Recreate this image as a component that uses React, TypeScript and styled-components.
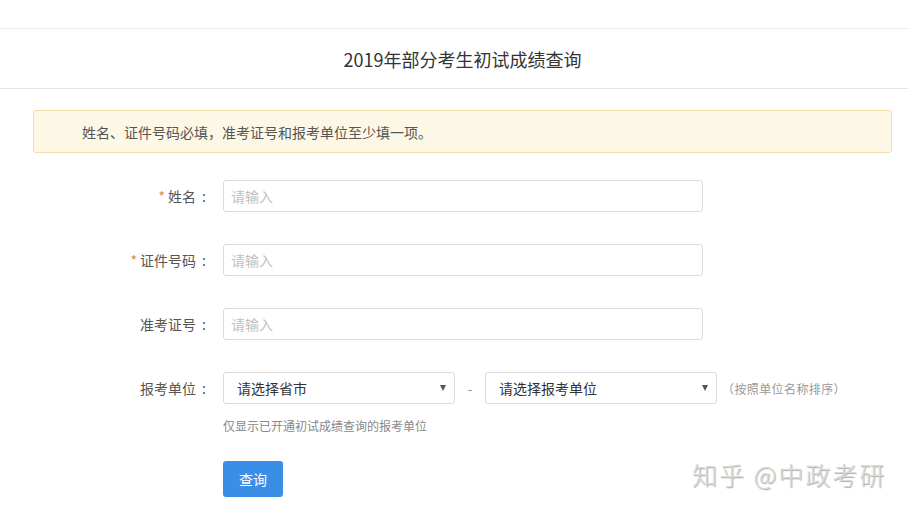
import styled, { createGlobalStyle } from "styled-components";

const GlobalStyle = createGlobalStyle`
	body {
		margin: 0;
		background: #fff;
		font-family: "Noto Sans CJK SC", "Noto Sans", sans-serif;
		color: #555;
	}
`;

const Page = styled.div`
	position: relative;
	width: 908px;
	height: 511px;
	overflow: hidden;
`;

const Header = styled.header`
	margin-top: 28px;
	height: 59px;
	padding-left: 17px;
	border-top: 1px solid #ebebeb;
	border-bottom: 1px solid #e4e4e4;
	display: flex;
	align-items: center;
	justify-content: center;

	h1 {
		margin: 0;
		font-size: 18px;
		font-weight: normal;
		color: #333;
	}
`;

const Main = styled.main`
	padding: 21px 16px 0 33px;
`;

const Alert = styled.div`
	height: 41px;
	display: flex;
	align-items: center;
	padding-left: 48px;
	background: #fdf8e6;
	border: 1px solid #f1deaa;
	border-radius: 3px;
	font-size: 14px;
	color: #555;
`;

const Form = styled.form`
	margin-top: 27px;
	display: flex;
	flex-direction: column;
	gap: 32px;
`;

const Row = styled.div`
	display: grid;
	grid-template-columns: 175px 1fr;
	column-gap: 15px;
	align-items: center;
`;

const Label = styled.label<{ $required?: boolean }>`
	text-align: right;
	font-size: 14px;
	color: #555;

	&::before {
		content: ${(p) => (p.$required ? '"*"' : '""')};
		color: #e0873a;
		margin-right: 3px;
	}

	&::after {
		content: ":";
		margin: 0 2px 0 6px;
	}
`;

const Input = styled.input`
	box-sizing: border-box;
	width: 480px;
	height: 32px;
	padding: 0 7px;
	border: 1px solid #dcdcdc;
	border-radius: 3px;
	font-family: inherit;
	font-size: 14px;
	outline: none;

	&::placeholder {
		color: #c0c0c0;
	}
`;

const Controls = styled.div`
	display: flex;
	align-items: center;
`;

const SelectBox = styled.div`
	box-sizing: border-box;
	width: 232px;
	height: 32px;
	padding: 0 8px 0 13px;
	border: 1px solid #dcdcdc;
	border-radius: 3px;
	display: flex;
	align-items: center;
	justify-content: space-between;
	font-size: 14px;
	color: #333;
`;

const Arrow = styled.span`
	width: 0;
	height: 0;
	border-left: 3px solid transparent;
	border-right: 3px solid transparent;
	border-top: 6px solid #555;
`;

const Dash = styled.span`
	width: 30px;
	text-align: center;
	color: #888;
	font-size: 13px;
`;

const Hint = styled.span`
	margin-left: 5px;
	font-size: 12px;
	letter-spacing: 0.4px;
	color: #999;
`;

const Help = styled.div`
	margin: -19px 0 0 190px;
	font-size: 12px;
	color: #888;
`;

const Submit = styled.button`
	margin: -5px 0 0 190px;
	width: 60px;
	height: 36px;
	border: none;
	border-radius: 3px;
	background: #3a8ee6;
	color: #fff;
	font-family: inherit;
	font-size: 14px;
`;

const Watermark = styled.div`
	position: absolute;
	left: 692px;
	top: 456px;
	font-size: 25px;
	font-weight: 300;
	letter-spacing: 2px;
	color: #dadada;
	text-shadow: 1px 1px 1px #a8a8a8;
`;

function Select({ text }: { text: string }) {
	return (
		<SelectBox>
			<span>{text}</span>
			<Arrow />
		</SelectBox>
	);
}

export default function App() {
	return (
		<Page>
			<GlobalStyle />
			<Header>
				<h1>2019年部分考生初试成绩查询</h1>
			</Header>
			<Main>
				<Alert>姓名、证件号码必填，准考证号和报考单位至少填一项。</Alert>
				<Form onSubmit={(e) => e.preventDefault()}>
					<Row>
						<Label $required>姓名</Label>
						<Input placeholder="请输入" />
					</Row>
					<Row>
						<Label $required>证件号码</Label>
						<Input placeholder="请输入" />
					</Row>
					<Row>
						<Label>准考证号</Label>
						<Input placeholder="请输入" />
					</Row>
					<Row>
						<Label>报考单位</Label>
						<Controls>
							<Select text="请选择省市" />
							<Dash>-</Dash>
							<Select text="请选择报考单位" />
							<Hint>（按照单位名称排序）</Hint>
						</Controls>
					</Row>
					<Help>仅显示已开通初试成绩查询的报考单位</Help>
					<Submit type="submit">查询</Submit>
				</Form>
			</Main>
			<Watermark>知乎 @中政考研</Watermark>
		</Page>
	);
}
